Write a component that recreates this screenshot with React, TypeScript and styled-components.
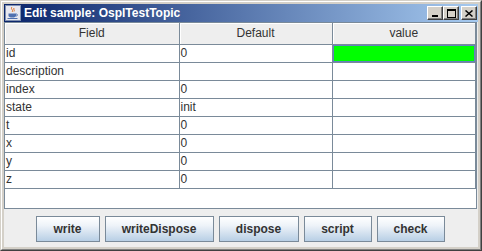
import React from 'react';
import styled, { createGlobalStyle } from 'styled-components';

const Global = createGlobalStyle`
  html, body { margin: 0; padding: 0; background: #d4d0c8; }
  body { width: 482px; height: 251px; overflow: hidden; font-family: "Liberation Sans", Arial, sans-serif; }
  * { box-sizing: border-box; }
`;

const Frame = styled.div`
  width: 482px;
  height: 251px;
  background: #d4d0c8;
  border-top: 1px solid #d4d0c8;
  border-left: 1px solid #d4d0c8;
  border-right: 1px solid #404040;
  border-bottom: 1px solid #404040;
  display: flex;
`;

const Inner = styled.div`
  flex: 1;
  border-top: 1px solid #ffffff;
  border-left: 1px solid #ffffff;
  border-right: 1px solid #808080;
  border-bottom: 1px solid #808080;
  padding: 2px;
  display: flex;
  flex-direction: column;
  min-height: 0;
`;

const TitleBar = styled.div`
  height: 18px;
  flex: none;
  display: flex;
  align-items: center;
  padding: 0 1px 0 1px;
  background: linear-gradient(to right, #0a246a, #a6caf0);
`;

const TitleText = styled.div`
  flex: 1;
  color: #ffffff;
  font-weight: bold;
  font-size: 12px;
  padding-left: 3px;
  white-space: nowrap;
`;

const CtlGroup = styled.div`
  display: flex;
  align-items: center;
`;

const CtlButton = styled.div<{ $gap?: number }>`
  width: 16px;
  height: 14px;
  margin-left: ${p => p.$gap ?? 0}px;
  background: #d4d0c8;
  border-top: 1px solid #ffffff;
  border-left: 1px solid #ffffff;
  border-right: 1px solid #404040;
  border-bottom: 1px solid #404040;
  box-shadow: inset -1px -1px 0 #808080;
  display: flex;
  align-items: center;
  justify-content: center;
`;

const Content = styled.div`
  flex: 1;
  background: #eeeeee;
  display: flex;
  flex-direction: column;
  min-height: 0;
`;

const ScrollPane = styled.div`
  height: 187px;
  flex: none;
  margin-right: 1px;
  border: 1px solid #7a8a99;
  background: #ffffff;
  overflow: hidden;
`;

const Table = styled.table`
  width: 100%;
  border-collapse: collapse;
  table-layout: fixed;
  font-size: 12px;
  color: #333333;
`;

const HeadCell = styled.th<{ $w?: number }>`
  ${p => (p.$w ? `width: ${p.$w}px;` : '')}
  height: 21px;
  padding: 0;
  font-weight: normal;
  text-align: center;
  background: #eeeeee;
  border-right: 1px solid #7a8a99;
  border-bottom: 1px solid #7a8a99;
  box-shadow: inset 1px 1px 0 #ffffff;
`;

const Cell = styled.td<{ $green?: boolean }>`
  height: 18px;
  padding: 0 0 0 1px;
  border-right: 1px solid #7a8a99;
  border-bottom: 1px solid #7a8a99;
  white-space: nowrap;
  overflow: hidden;
  background: ${p => (p.$green ? '#00ff00' : '#ffffff')};
  ${p => (p.$green ? 'box-shadow: inset 0 0 0 1px #6382bf;' : '')}
`;

const ButtonBar = styled.div`
  flex: 1;
  display: flex;
  justify-content: center;
  align-items: flex-start;
  gap: 5px;
  padding-top: 7px;
  padding-right: 2px;
`;

const Btn = styled.button<{ $w: number }>`
  width: ${p => p.$w}px;
  height: 26px;
  padding: 0;
  border: 1px solid #7a8a99;
  background: linear-gradient(to bottom, #ffffff 0%, #eef3f9 35%, #b8cfe5 100%);
  font-family: "Liberation Sans", Arial, sans-serif;
  font-size: 12px;
  font-weight: bold;
  color: #333333;
`;

const JavaIcon = () => (
  <svg width="16" height="16" viewBox="0 0 16 16">
    <rect x="0.5" y="0.5" width="15" height="15" fill="#e8e8f0" stroke="#8090b0" />
    <path d="M7 2 C5 4 9 5 7 7 M9 3 C8 4.5 10 5 9 6.5" stroke="#e07020" strokeWidth="1" fill="none" />
    <path d="M3.5 8.5 H11 V10.5 C11 12 9.5 12.5 7.3 12.5 C5 12.5 3.5 12 3.5 10.5 Z" fill="#5070b0" />
    <path d="M11 9 C13 9 13 11 11 11" stroke="#5070b0" strokeWidth="1" fill="none" />
    <path d="M2.5 13.5 H12.5" stroke="#5070b0" strokeWidth="1" />
  </svg>
);

const rows: [string, string][] = [
  ['id', '0'],
  ['description', ''],
  ['index', '0'],
  ['state', 'init'],
  ['t', '0'],
  ['x', '0'],
  ['y', '0'],
  ['z', '0'],
];

const buttons: [string, number][] = [
  ['write', 64],
  ['writeDispose', 109],
  ['dispose', 80],
  ['script', 68],
  ['check', 68],
];

export default function App() {
  return (
    <>
      <Global />
      <Frame>
        <Inner>
          <TitleBar>
            <JavaIcon />
            <TitleText>Edit sample: OsplTestTopic</TitleText>
            <CtlGroup>
              <CtlButton>
                <svg width="8" height="7" viewBox="0 0 8 7"><rect x="1" y="5" width="6" height="2" fill="#000" /></svg>
              </CtlButton>
              <CtlButton>
                <svg width="9" height="9" viewBox="0 0 9 9"><rect x="0.5" y="0.5" width="8" height="8" fill="none" stroke="#000" /><rect x="0" y="0" width="9" height="2" fill="#000" /></svg>
              </CtlButton>
              <CtlButton $gap={2}>
                <svg width="8" height="7" viewBox="0 0 8 7"><path d="M0.5 0.5 L7.5 6.5 M7.5 0.5 L0.5 6.5" stroke="#000" strokeWidth="1.5" /></svg>
              </CtlButton>
            </CtlGroup>
          </TitleBar>
          <Content>
            <ScrollPane>
              <Table>
                <thead>
                  <tr>
                    <HeadCell $w={174}>Field</HeadCell>
                    <HeadCell $w={153}>Default</HeadCell>
                    <HeadCell>value</HeadCell>
                  </tr>
                </thead>
                <tbody>
                  {rows.map(([f, d], i) => (
                    <tr key={f}>
                      <Cell>{f}</Cell>
                      <Cell>{d}</Cell>
                      <Cell $green={i === 0}></Cell>
                    </tr>
                  ))}
                </tbody>
              </Table>
            </ScrollPane>
            <ButtonBar>
              {buttons.map(([t, w]) => (
                <Btn key={t} $w={w}>{t}</Btn>
              ))}
            </ButtonBar>
          </Content>
        </Inner>
      </Frame>
    </>
  );
}
